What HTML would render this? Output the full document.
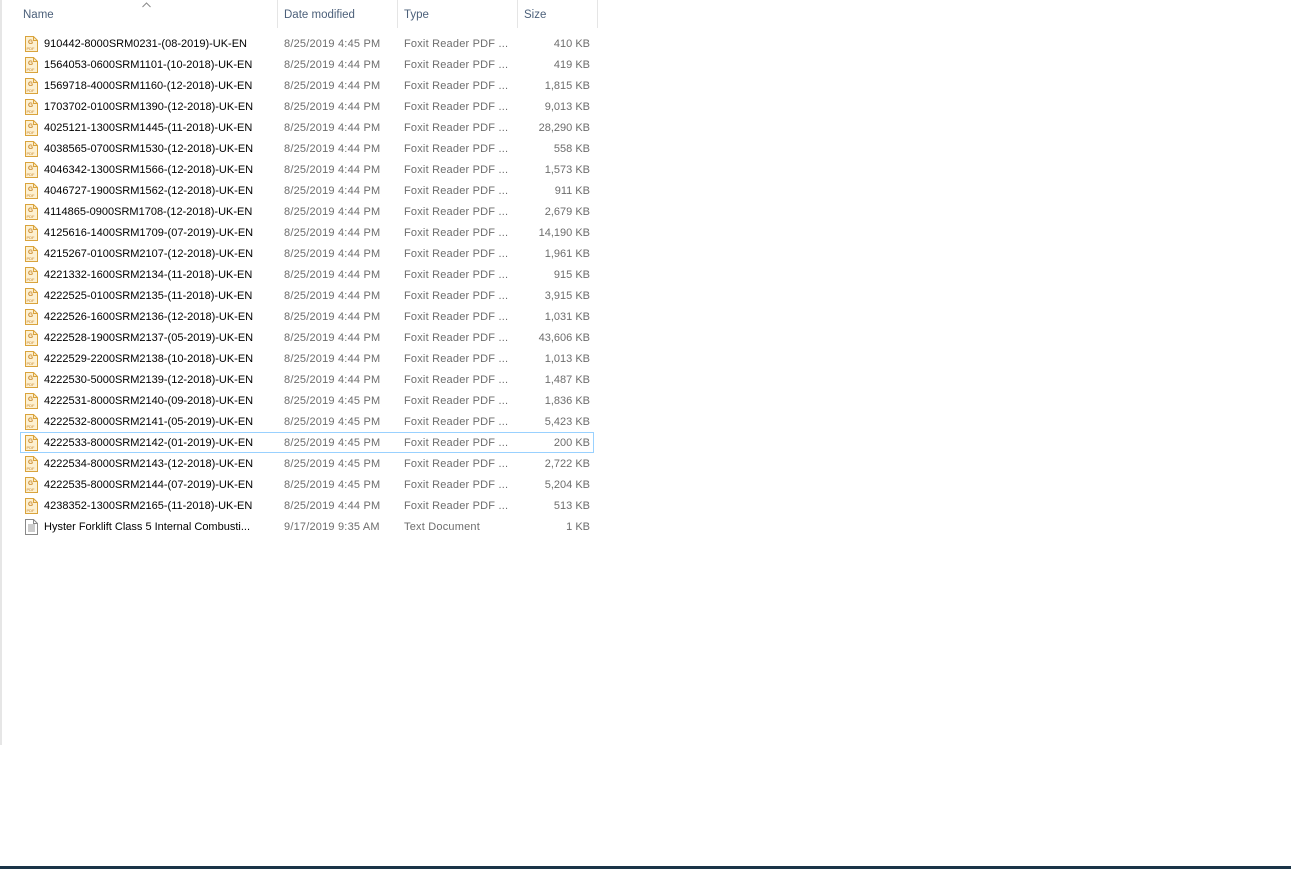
<!DOCTYPE html>
<html><head><meta charset="utf-8"><style>
body{margin:0;width:1291px;height:869px;background:#fff;position:relative;overflow:hidden;font-family:"Liberation Sans",sans-serif;font-size:11px}
.lb{position:absolute;left:0;top:0;width:2px;height:745px;background:#e6e6e6}
.bot{position:absolute;left:0;top:866px;width:1291px;height:3px;background:#1a3447}
.hdr{position:absolute;top:9px;color:#4c607a;font-size:11.5px}
.sep{position:absolute;top:0;width:1px;height:28px;background:#e5e5e5}
.row{position:absolute;left:20px;width:574px;height:21px;line-height:22px}
.row span{position:absolute;top:0;white-space:nowrap}
.n{left:24px;color:#000}
.d{left:264px;color:#6d6d6d;letter-spacing:0.2px}
.t{left:384px;color:#6d6d6d;letter-spacing:0.2px}
.s{right:4px;color:#6d6d6d;text-align:right}
.ic{position:absolute;left:5px;top:3px}
.sel{outline:1px solid #99d1ff;outline-offset:-1px}
</style></head><body>
<div class="lb"></div>
<div class="bot"></div>
<div class="hdr" style="left:23px">Name</div>
<svg style="position:absolute;left:142px;top:2px" width="9" height="6"><path d="M.5 5L4.5 1 8.5 5" fill="none" stroke="#8a8a8a"/></svg>
<div class="hdr" style="left:284px">Date modified</div>
<div class="hdr" style="left:404px">Type</div>
<div class="hdr" style="left:524px">Size</div>
<div class="sep" style="left:277px"></div>
<div class="sep" style="left:397px"></div>
<div class="sep" style="left:517px"></div>
<div class="sep" style="left:597px"></div>
<div id="rows"></div>
<script>
var data=[
["910442-8000SRM0231-(08-2019)-UK-EN","8/25/2019 4:45 PM","410 KB"],
["1564053-0600SRM1101-(10-2018)-UK-EN","8/25/2019 4:44 PM","419 KB"],
["1569718-4000SRM1160-(12-2018)-UK-EN","8/25/2019 4:44 PM","1,815 KB"],
["1703702-0100SRM1390-(12-2018)-UK-EN","8/25/2019 4:44 PM","9,013 KB"],
["4025121-1300SRM1445-(11-2018)-UK-EN","8/25/2019 4:44 PM","28,290 KB"],
["4038565-0700SRM1530-(12-2018)-UK-EN","8/25/2019 4:44 PM","558 KB"],
["4046342-1300SRM1566-(12-2018)-UK-EN","8/25/2019 4:44 PM","1,573 KB"],
["4046727-1900SRM1562-(12-2018)-UK-EN","8/25/2019 4:44 PM","911 KB"],
["4114865-0900SRM1708-(12-2018)-UK-EN","8/25/2019 4:44 PM","2,679 KB"],
["4125616-1400SRM1709-(07-2019)-UK-EN","8/25/2019 4:44 PM","14,190 KB"],
["4215267-0100SRM2107-(12-2018)-UK-EN","8/25/2019 4:44 PM","1,961 KB"],
["4221332-1600SRM2134-(11-2018)-UK-EN","8/25/2019 4:44 PM","915 KB"],
["4222525-0100SRM2135-(11-2018)-UK-EN","8/25/2019 4:44 PM","3,915 KB"],
["4222526-1600SRM2136-(12-2018)-UK-EN","8/25/2019 4:44 PM","1,031 KB"],
["4222528-1900SRM2137-(05-2019)-UK-EN","8/25/2019 4:44 PM","43,606 KB"],
["4222529-2200SRM2138-(10-2018)-UK-EN","8/25/2019 4:44 PM","1,013 KB"],
["4222530-5000SRM2139-(12-2018)-UK-EN","8/25/2019 4:44 PM","1,487 KB"],
["4222531-8000SRM2140-(09-2018)-UK-EN","8/25/2019 4:45 PM","1,836 KB"],
["4222532-8000SRM2141-(05-2019)-UK-EN","8/25/2019 4:45 PM","5,423 KB"],
["4222533-8000SRM2142-(01-2019)-UK-EN","8/25/2019 4:45 PM","200 KB"],
["4222534-8000SRM2143-(12-2018)-UK-EN","8/25/2019 4:45 PM","2,722 KB"],
["4222535-8000SRM2144-(07-2019)-UK-EN","8/25/2019 4:45 PM","5,204 KB"],
["4238352-1300SRM2165-(11-2018)-UK-EN","8/25/2019 4:44 PM","513 KB"]
];
var pdf='<svg class="ic" width="13" height="16" viewBox="0 0 13 16"><path d="M.5 .5h8l4 4v11H.5z" fill="#fdf0d0" stroke="#d9a33c"/><path d="M8.5 .5v4h4" fill="none" stroke="#d9a33c"/><text x="3" y="8" font-size="6.5" font-weight="bold" fill="#c8862a" font-family="Liberation Sans">G</text><text x="1.5" y="14" font-size="4" fill="#c8862a" font-family="Liberation Sans">PDF</text></svg>';
var txt='<svg class="ic" width="13" height="16" viewBox="0 0 13 16"><path d="M.5 .5h8l4 4v11H.5z" fill="#fff" stroke="#888"/><path d="M8.5 .5v4h4" fill="none" stroke="#888"/><path d="M3 6h7M3 8h7M3 10h7M3 12h7" stroke="#999"/></svg>';
var h='';
data.forEach(function(r,i){
h+='<div class="row'+(i==19?' sel':'')+'" style="top:'+(33+i*21)+'px">'+pdf+'<span class="n">'+r[0]+'</span><span class="d">'+r[1]+'</span><span class="t">Foxit Reader PDF ...</span><span class="s">'+r[2]+'</span></div>';
});
h+='<div class="row" style="top:'+(33+23*21)+'px">'+txt+'<span class="n">Hyster Forklift Class 5 Internal Combusti...</span><span class="d">9/17/2019 9:35 AM</span><span class="t">Text Document</span><span class="s">1 KB</span></div>';
document.getElementById('rows').innerHTML=h;
</script>
</body></html>
